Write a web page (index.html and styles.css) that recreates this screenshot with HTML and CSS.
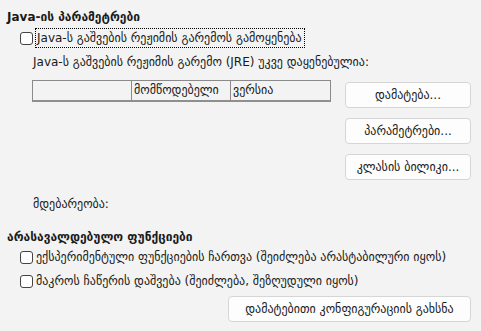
FILE: index.html
```html
<!DOCTYPE html>
<html lang="ka">
<head>
<meta charset="utf-8">
<link rel="stylesheet" href="styles.css">
</head>
<body>
<div class="page">
  <section class="java">
    <h2 class="title">Java-ის პარამეტრები</h2>
    <label class="check first">
      <span class="box"></span>
      <span class="focus">Java-ს გაშვების რეჟიმის გარემოს გამოყენება</span>
    </label>
    <p class="note">Java-ს გაშვების რეჟიმის გარემო (JRE) უკვე დაყენებულია:</p>
    <div class="jre">
      <div class="table">
        <div class="head">
          <span class="cell c1"></span>
          <span class="cell c2">მომწოდებელი</span>
          <span class="cell c3">ვერსია</span>
        </div>
      </div>
      <div class="buttons">
        <button class="btn">დამატება...</button>
        <button class="btn">პარამეტრები...</button>
        <button class="btn">კლასის ბილიკი...</button>
      </div>
    </div>
    <p class="location">მდებარეობა:</p>
  </section>
  <section class="optional">
    <h2 class="title">არასავალდებულო ფუნქციები</h2>
    <label class="check">
      <span class="box"></span>
      <span>ექსპერიმენტული ფუნქციების ჩართვა (შეიძლება არასტაბილური იყოს)</span>
    </label>
    <label class="check">
      <span class="box"></span>
      <span>მაკროს ჩაწერის დაშვება (შეიძლება, შეზღუდული იყოს)</span>
    </label>
    <div class="bottom">
      <button class="btn wide">დამატებითი კონფიგურაციის გახსნა</button>
    </div>
  </section>
</div>
</body>
</html>
```

FILE: styles.css
```css
html, body {
  margin: 0;
  padding: 0;
  background: #f3f3f3;
}
body {
  font-family: "Segoe UI", "DejaVu Sans", sans-serif;
  font-size: 12px;
  line-height: 16px;
  color: #1a1a1a;
  width: 481px;
  height: 331px;
  overflow: hidden;
}
.page {
  padding: 9px 10px 0 7px;
}
.title {
  margin: 0;
  font-size: 12px;
  font-weight: bold;
  line-height: 16px;
}
.check {
  display: flex;
  align-items: center;
  gap: 3px;
  margin-left: 13px;
  height: 18px;
}
.box {
  width: 11px;
  height: 11px;
  border: 1px solid #444;
  border-radius: 3px;
  background: #fff;
  flex: none;
}
.focus {
  outline: 1px dotted #000;
  padding: 1px 2px 1px 1px;
}
.java .check.first {
  margin-top: 4px;
}
.note {
  margin: 7px 0 0 26px;
}
.jre {
  display: flex;
  align-items: flex-start;
  margin: 10px 0 0 25px;
}
.table {
  width: 299px;
}
.head {
  display: flex;
  height: 19px;
  border: 1px solid #8a8a8a;
  border-bottom: 2px solid #8f8f8f;
  background: #f3f3f3;
}
.cell {
  line-height: 19px;
  padding-left: 2px;
}
.c1 { width: 96px; border-right: 1px solid #8a8a8a; }
.c2 { width: 96px; border-right: 1px solid #8a8a8a; }
.c3 { flex: 1; }
.buttons {
  display: flex;
  flex-direction: column;
  gap: 10px;
  margin: 2px 0 0 14px;
}
.btn {
  font: inherit;
  color: #1a1a1a;
  width: 126px;
  height: 26px;
  background: #fdfdfd;
  border: 1px solid #d6d6d6;
  border-radius: 4px;
  padding: 0;
}
.location {
  margin: 16px 0 0 26px;
}
.optional {
  margin-top: 17px;
}
.optional .check {
  height: 24px;
}
.bottom {
  display: flex;
  justify-content: flex-end;
  margin-top: 3px;
}
.btn.wide {
  width: 243px;
  height: 26px;
}
```
